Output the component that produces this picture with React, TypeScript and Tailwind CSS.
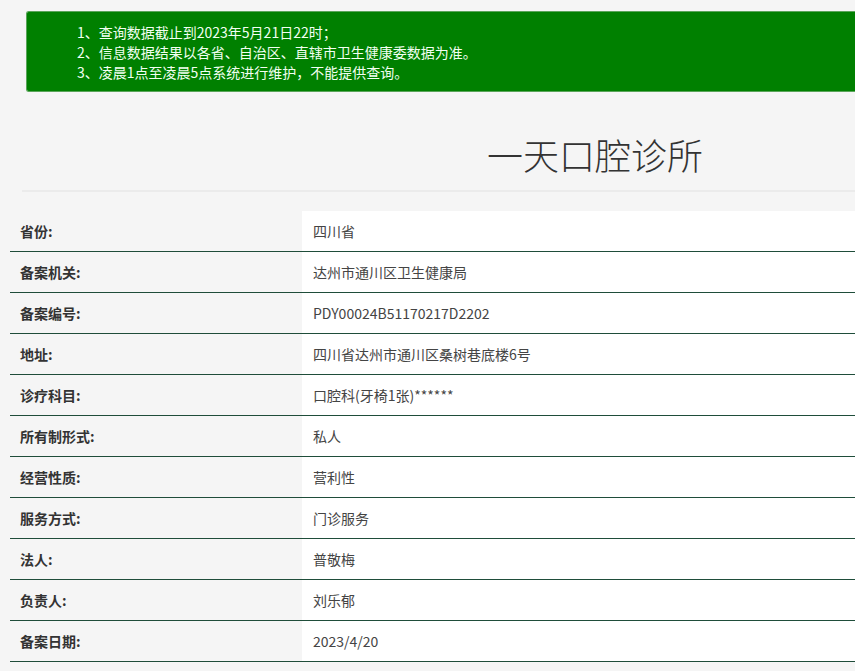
const rows: [string, string][] = [
  ['省份', '四川省'],
  ['备案机关', '达州市通川区卫生健康局'],
  ['备案编号', 'PDY00024B51170217D2202'],
  ['地址', '四川省达州市通川区桑树巷底楼6号'],
  ['诊疗科目', '口腔科(牙椅1张)******'],
  ['所有制形式', '私人'],
  ['经营性质', '营利性'],
  ['服务方式', '门诊服务'],
  ['法人', '普敬梅'],
  ['负责人', '刘乐郁'],
  ['备案日期', '2023/4/20'],
]

export default function App() {
  return (
    <div className="min-h-[671px] w-[855px] overflow-hidden bg-[#f5f5f5] pt-[11px] font-['Microsoft_YaHei','Noto_Sans_CJK_SC',sans-serif] text-[#333]">
      <div className="ml-[26px] rounded-l-[3px] border-y border-l border-[#5aa55a] bg-[#008000] pb-[9px] pl-[50px] pt-[10px] text-[14px] leading-[20px] text-[#f2fff2]">
        <p>1、查询数据截止到2023年5月21日22时；</p>
        <p>2、信息数据结果以各省、自治区、直辖市卫生健康委数据为准。</p>
        <p>3、凌晨1点至凌晨5点系统进行维护，不能提供查询。</p>
      </div>

      <div className="ml-[22px] mt-[42px] border-b-2 border-[#ebebeb] pb-[16px]">
        <h1 className="pl-[465px] text-[36px] font-light leading-[40px] text-[#333]">一天口腔诊所</h1>
      </div>

      <div className="ml-[10px] mt-[19px]">
        {rows.map(([label, value]) => (
          <div key={label} className="flex h-[41px] border-b border-[#1f4d3a]">
            <div className="flex w-[292px] items-center pl-[10px] text-[14px] font-bold text-[#333]">{label}:</div>
            <div className="flex flex-1 items-center bg-white pl-[11px] text-[14px] text-[#444]">{value}</div>
          </div>
        ))}
      </div>
    </div>
  )
}
